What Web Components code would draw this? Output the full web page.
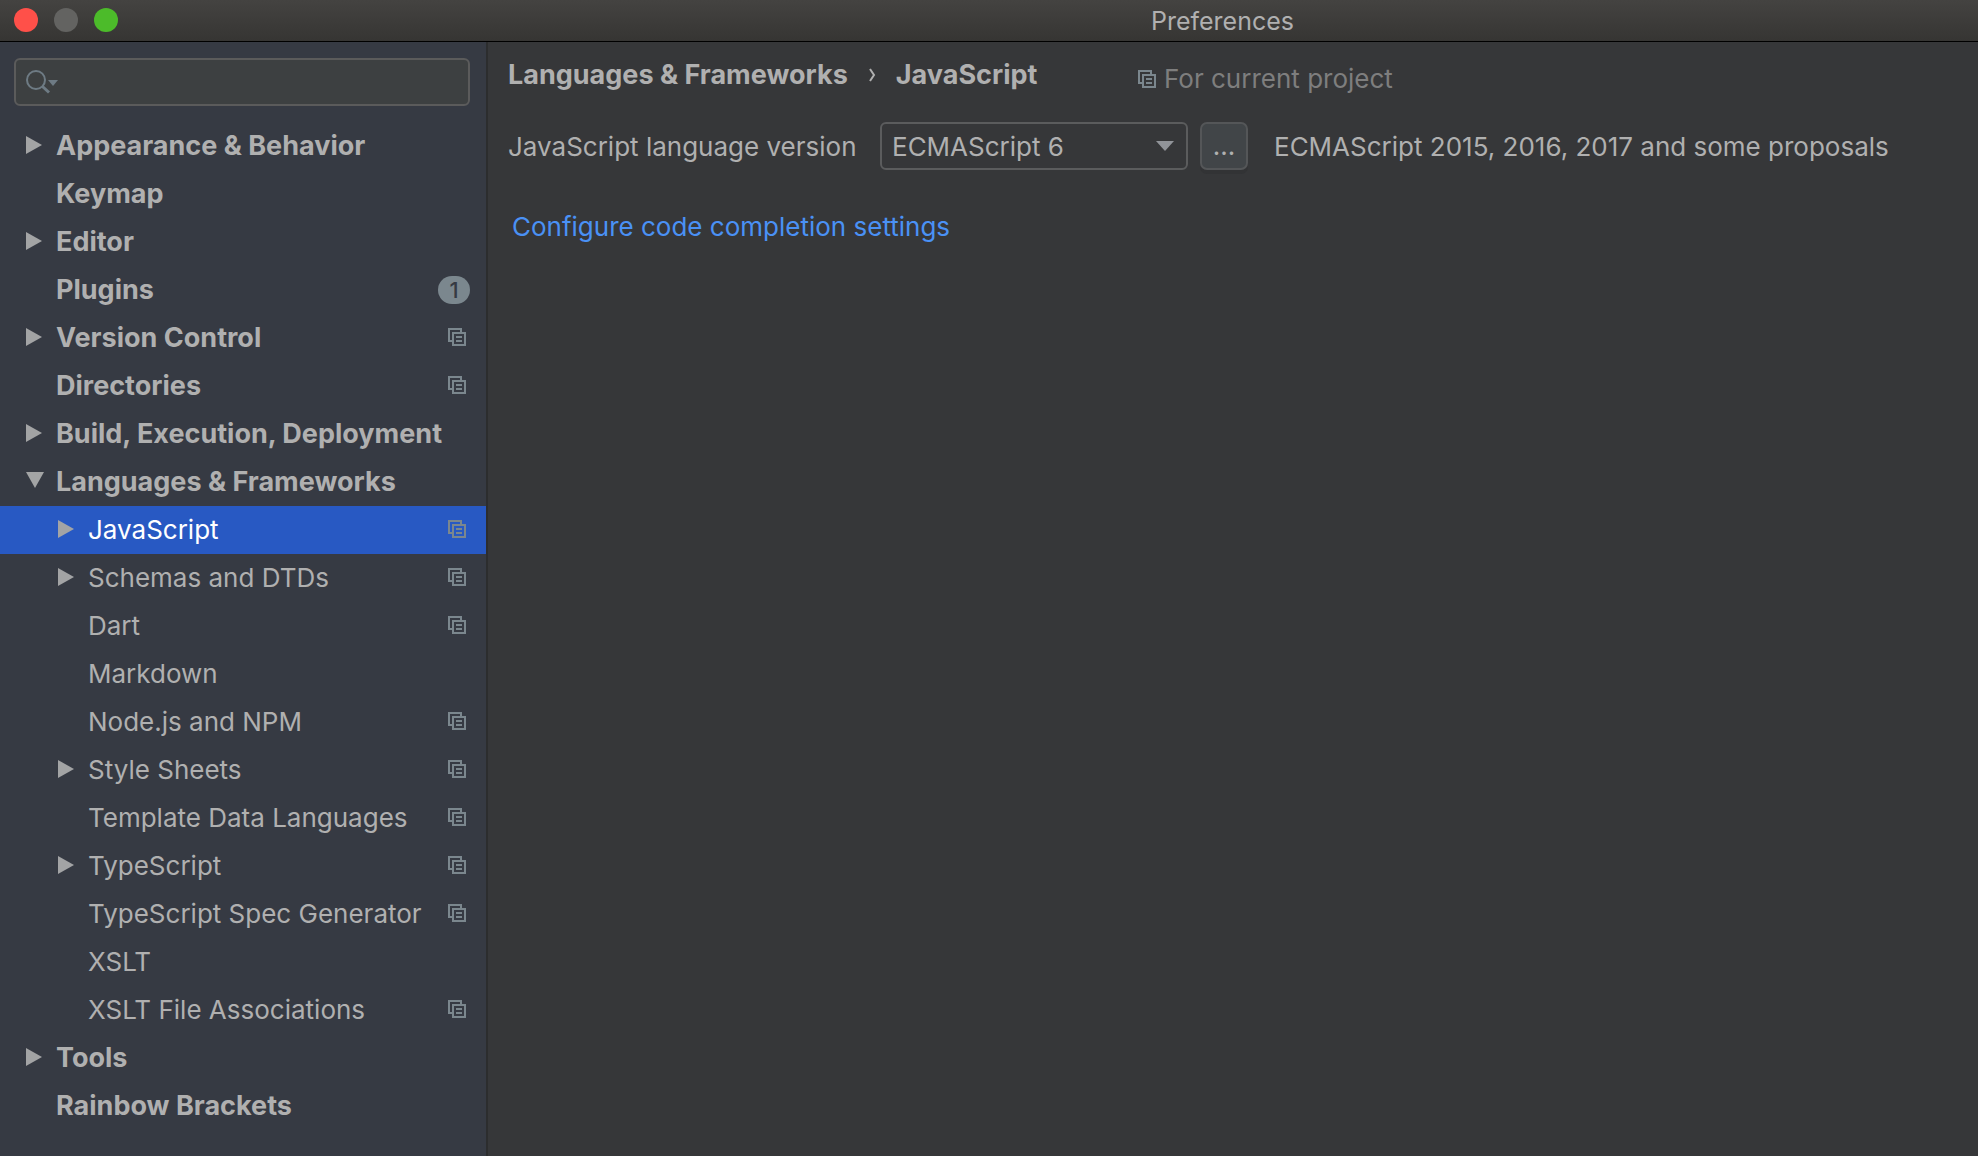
<!DOCTYPE html>
<html lang="en">
<head>
<meta charset="utf-8">
<title>Preferences</title>
<style>
  html, body { height: 100%; margin: 0; }
  body {
    --text: #b0b0b0;
    --muted: #7e7e7e;
    --icon: #7b878e;
    --side: #363a43;
    --main: #363739;
    --line: #5b5c5d;
    background: var(--main);
    color: var(--text);
    font: 400 26px/32px Inter, "Liberation Sans", sans-serif;
  }
</style>
</head>
<body>
<preferences-window></preferences-window>

<template id="t-window">
  <style>
    :host { display: flex; flex-direction: column; min-height: 100vh; }
    .body { flex: 1; display: grid; grid-template-columns: 488px minmax(0, 1fr); }
  </style>
  <title-bar>Preferences</title-bar>
  <div class="body">
    <settings-sidebar></settings-sidebar>
    <settings-page></settings-page>
  </div>
</template>

<template id="t-title">
  <style>
    :host {
      display: flex; align-items: center; box-sizing: border-box; height: 42px; padding: 0 0 1px 14px;
      background: linear-gradient(#444341, #363533); border-bottom: 1px solid #000;
    }
    .lights { display: flex; gap: 16px; width: 453px; flex: none; }
    button { width: 24px; height: 24px; padding: 0; border: 0; border-radius: 50%; background: var(--c); }
    .name { flex: 1; padding-top: 2px; text-align: center; font-size: 25px; }
  </style>
  <div class="lights">
    <button aria-label="Close" style="--c:#ff5049"></button>
    <button aria-label="Minimize" style="--c:#636361"></button>
    <button aria-label="Zoom" style="--c:#4cbb2a"></button>
  </div>
  <div class="name"><slot></slot></div>
</template>

<template id="t-sidebar">
  <style>
    :host { display: block; background: var(--side); border-right: 2px solid #2c2d2e; padding-top: 16px; }
    nav { padding-top: 16px; }
  </style>
  <search-box></search-box>
  <nav role="tree" aria-label="Settings">
    <tree-row arrow="right">Appearance &amp; Behavior</tree-row>
    <tree-row>Keymap</tree-row>
    <tree-row arrow="right">Editor</tree-row>
    <tree-row badge="1">Plugins</tree-row>
    <tree-row arrow="right" project>Version Control</tree-row>
    <tree-row project>Directories</tree-row>
    <tree-row arrow="right">Build, Execution, Deployment</tree-row>
    <tree-row arrow="down">Languages &amp; Frameworks</tree-row>
    <tree-row sub arrow="right" project selected>JavaScript</tree-row>
    <tree-row sub arrow="right" project>Schemas and DTDs</tree-row>
    <tree-row sub project>Dart</tree-row>
    <tree-row sub>Markdown</tree-row>
    <tree-row sub project>Node.js and NPM</tree-row>
    <tree-row sub arrow="right" project>Style Sheets</tree-row>
    <tree-row sub project>Template Data Languages</tree-row>
    <tree-row sub arrow="right" project>TypeScript</tree-row>
    <tree-row sub project>TypeScript Spec Generator</tree-row>
    <tree-row sub>XSLT</tree-row>
    <tree-row sub project>XSLT File Associations</tree-row>
    <tree-row arrow="right">Tools</tree-row>
    <tree-row>Rainbow Brackets</tree-row>
  </nav>
</template>

<template id="t-search">
  <style>
    :host {
      display: flex; align-items: center; gap: 6px; box-sizing: border-box; height: 48px;
      margin: 0 16px 0 14px; padding: 0 10px; border: 2px solid #5b5b5b; border-radius: 6px; background: #3d4041;
    }
    input { flex: 1; min-width: 0; border: 0; outline: 0; background: none; color: inherit; font: inherit; }
  </style>
  <svg width="32" height="24" viewBox="0 0 32 24" aria-hidden="true">
    <circle cx="10" cy="10" r="9" fill="none" stroke="#6e7b84" stroke-width="2"/>
    <path d="M16.5 16.5L23 22.5" stroke="#6e7b84" stroke-width="3"/>
    <path d="M22 10h10l-5 6z" fill="#6e7b84"/>
  </svg>
  <input type="text" aria-label="Search settings">
</template>

<template id="t-row">
  <style>
    :host {
      display: flex; align-items: center; gap: 12px; box-sizing: border-box; height: 48px;
      padding: 0 16px 2px 26px; font-size: 27px; font-weight: 700; white-space: nowrap;
    }
    :host([sub]) { padding-left: 58px; font-size: 26px; font-weight: 400; }
    :host([selected]) { background: #2859c3; color: #fff; }
    .arrow { width: 18px; height: 18px; flex: none; fill: #a3a4a5; }
    .label { flex: 1; min-width: 0; padding-top: 1px; }
    .badge {
      width: 32px; height: 28px; margin-top: 2px; border-radius: 14px; background: var(--icon); color: var(--side);
      font-size: 22px; line-height: 28px; text-align: center; font-weight: 500;
    }
    project-icon { margin-right: 4px; }
  </style>
  <svg class="arrow" viewBox="0 0 18 18" aria-hidden="true"><path/></svg>
  <span class="label"><slot></slot></span>
</template>

<template id="t-project">
  <style>:host { display: block; flex: none; width: 18px; height: 18px; } svg { display: block; }</style>
  <svg width="18" height="18" viewBox="0 0 18 18" aria-hidden="true" fill="none" stroke="#7b878e" stroke-width="2">
    <path d="M13 4V1H1v12h3M5 5h12v12H5zM8 9h6M8 13h6"/>
  </svg>
</template>

<template id="t-page">
  <style>
    :host { display: block; background: var(--main); padding: 16px 20px; }
    header { display: flex; align-items: flex-start; height: 64px; white-space: nowrap; }
    .crumbs { display: flex; align-items: center; gap: 20px; width: 630px; padding-top: 1px; font-size: 27px; font-weight: 700; }
    .scope { display: flex; align-items: center; gap: 8px; padding-top: 5px; color: var(--muted); }
    .line { display: flex; align-items: center; white-space: nowrap; }
    label { width: 372px; padding-top: 1px; }
    .combo { display: grid; width: 308px; }
    .combo > * { grid-area: 1 / 1; }
    .combo svg { justify-self: end; align-self: center; margin-right: 14px; pointer-events: none; }
    select {
      appearance: none; box-sizing: border-box; width: 100%; height: 48px; padding: 1px 40px 0 10px; margin: 0;
      border: 2px solid var(--line); border-radius: 6px; background: var(--main); color: inherit; font: inherit;
    }
    button {
      box-sizing: border-box; width: 48px; height: 48px; margin: 0 26px 0 12px; padding: 0;
      border: 2px solid #545658; border-radius: 7px; background: #414548; color: inherit; font: inherit;
      box-shadow: 0 4px 0 #323335;
    }
    .note { padding-top: 1px; }
    .more { margin: 41px 0 0 4px; }
    a { color: #4a91f5; text-decoration: none; }
  </style>
  <header>
    <div class="crumbs">
      <span>Languages &amp; Frameworks</span>
      <svg width="8" height="14" viewBox="0 0 8 14" aria-hidden="true"><path d="M2 1l4 6-4 6" fill="none" stroke="#b0b0b0" stroke-width="2"/></svg>
      <span>JavaScript</span>
    </div>
    <div class="scope"><project-icon></project-icon><span>For current project</span></div>
  </header>
  <div class="line">
    <label for="version">JavaScript language version</label>
    <div class="combo">
      <select id="version"><option>ECMAScript 6</option></select>
      <svg width="18" height="10" viewBox="0 0 18 10" aria-hidden="true"><path d="M0 0h18l-9 10z" fill="#919499"/></svg>
    </div>
    <button type="button">...</button>
    <span class="note">ECMAScript 2015, 2016, 2017 and some proposals</span>
  </div>
  <div class="more"><a href="#completion">Configure code completion settings</a></div>
</template>

<script>
  class TemplateElement extends HTMLElement {
    constructor() {
      super();
      this.attachShadow({ mode: "open" })
        .append(document.getElementById(this.constructor.template).content.cloneNode(true));
    }
  }
  const define = (name, template) =>
    customElements.define(name, class extends TemplateElement { static template = template; });

  define("project-icon", "t-project");
  define("search-box", "t-search");
  define("title-bar", "t-title");

  customElements.define("tree-row", class extends TemplateElement {
    static template = "t-row";
    connectedCallback() {
      const arrow = this.getAttribute("arrow");
      const shapes = { right: "M0 0l16 9-16 9z", down: "M0 0h18l-9 16z" };
      this.setAttribute("role", "treeitem");
      if (arrow) {
        this.shadowRoot.querySelector("path").setAttribute("d", shapes[arrow]);
        this.setAttribute("aria-expanded", arrow === "down");
      }
      if (this.hasAttribute("badge")) {
        const badge = document.createElement("span");
        badge.className = "badge";
        badge.textContent = this.getAttribute("badge");
        this.shadowRoot.append(badge);
      }
      if (this.hasAttribute("project")) this.shadowRoot.append(document.createElement("project-icon"));
    }
  });

  define("settings-sidebar", "t-sidebar");
  define("settings-page", "t-page");
  define("preferences-window", "t-window");
</script>
</body>
</html>
